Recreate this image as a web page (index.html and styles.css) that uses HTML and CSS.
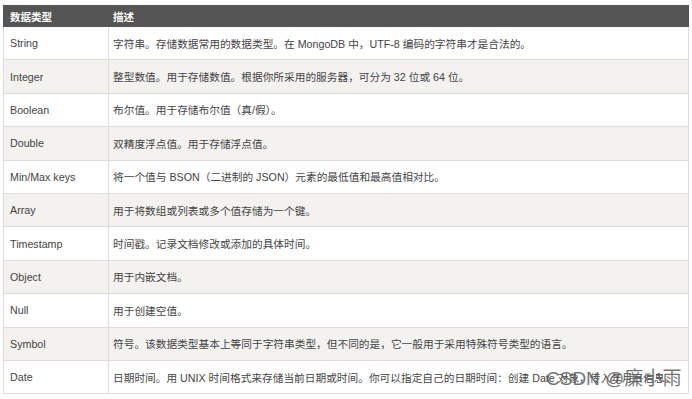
FILE: index.html
```html
<!DOCTYPE html>
<html lang="zh">
<head>
<meta charset="utf-8">
<link rel="stylesheet" href="styles.css">
</head>
<body>
<div class="wrap">
<table class="types">
  <thead>
    <tr><th class="c1">数据类型</th><th>描述</th></tr>
  </thead>
  <tbody>
    <tr><td class="c1">String</td><td>字符串。存储数据常用的数据类型。在 MongoDB 中，UTF-8 编码的字符串才是合法的。</td></tr>
    <tr><td class="c1">Integer</td><td>整型数值。用于存储数值。根据你所采用的服务器，可分为 32 位或 64 位。</td></tr>
    <tr><td class="c1">Boolean</td><td>布尔值。用于存储布尔值（真/假）。</td></tr>
    <tr><td class="c1">Double</td><td>双精度浮点值。用于存储浮点值。</td></tr>
    <tr><td class="c1">Min/Max keys</td><td>将一个值与 BSON（二进制的 JSON）元素的最低值和最高值相对比。</td></tr>
    <tr><td class="c1">Array</td><td>用于将数组或列表或多个值存储为一个键。</td></tr>
    <tr><td class="c1">Timestamp</td><td>时间戳。记录文档修改或添加的具体时间。</td></tr>
    <tr><td class="c1">Object</td><td>用于内嵌文档。</td></tr>
    <tr><td class="c1">Null</td><td>用于创建空值。</td></tr>
    <tr><td class="c1">Symbol</td><td>符号。该数据类型基本上等同于字符串类型，但不同的是，它一般用于采用特殊符号类型的语言。</td></tr>
    <tr><td class="c1">Date</td><td>日期时间。用 UNIX 时间格式来存储当前日期或时间。你可以指定自己的日期时间：创建 Date 对象，传入年月日信息。</td></tr>
  </tbody>
</table>
<div class="watermark">CSDN @廉小雨</div>
</div>
</body>
</html>
```
FILE: styles.css
```css
html, body {
  margin: 0;
  padding: 0;
  background: #ffffff;
}
body {
  padding: 5px 3px 0 3px;
  overflow: hidden;
  font-family: "Liberation Sans", Arial, "Noto Sans CJK SC", sans-serif;
}
.wrap {
  position: relative;
}
.types {
  width: 686px;
  border-collapse: collapse;
  table-layout: fixed;
  font-size: 10.7px;
  color: #444444;
}
.types th {
  background: #555555;
  color: #ffffff;
  font-weight: bold;
  text-align: left;
  height: 20px;
  padding: 0 4px;
  font-size: 10.5px;
  border: 1px solid #555555;
  white-space: nowrap;
}
.types th.c1 {
  padding-left: 6px;
}
.types .c1 {
  width: 105px;
  box-sizing: border-box;
}
.types td {
  height: 33.4px;
  padding: 0 4px;
  border: 1px solid #dddddd;
  white-space: nowrap;
  overflow: hidden;
  box-sizing: border-box;
}
.types td.c1 {
  padding-left: 6px;
}
.types tbody tr:nth-child(even) td {
  background: #f3f2ef;
}
.watermark {
  position: absolute;
  left: 543px;
  top: 363px;
  font-size: 19px;
  line-height: 22px;
  color: rgba(95, 95, 95, 0.88);
  font-family: "Liberation Sans", "Noto Sans CJK SC", sans-serif;
  white-space: nowrap;
}
```
